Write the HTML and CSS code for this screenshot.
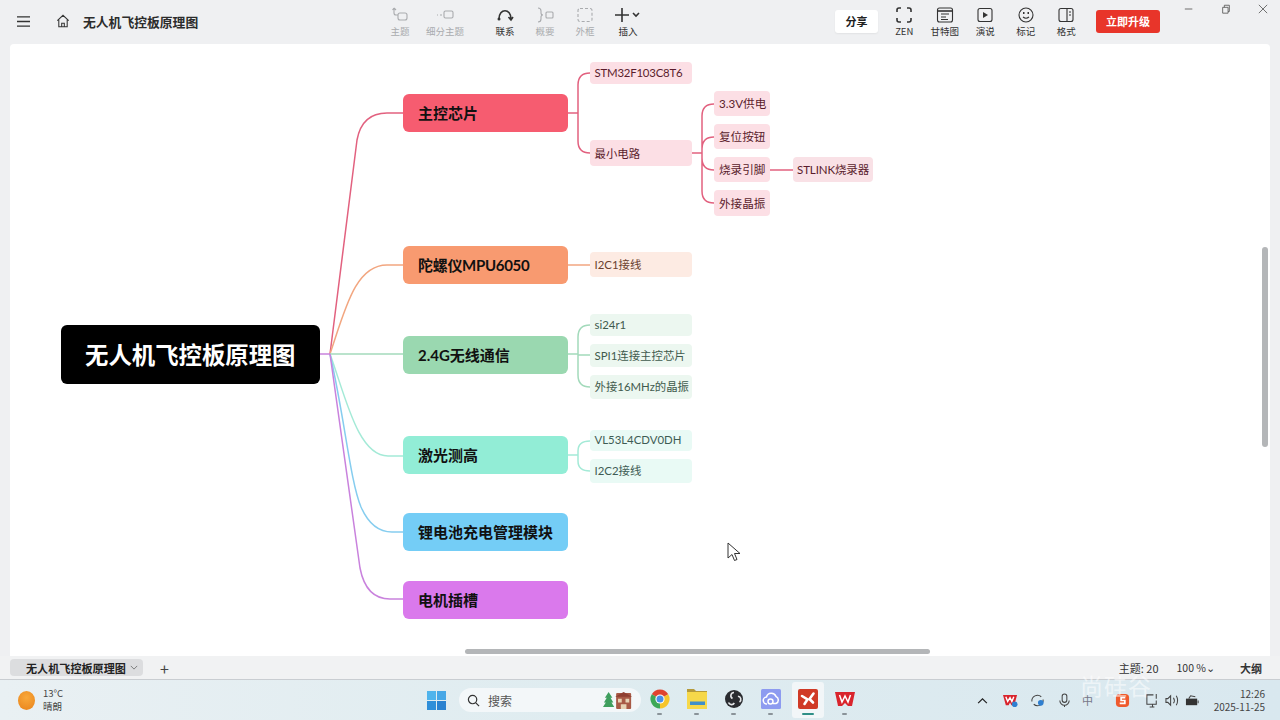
FILE: index.html
```html
<!DOCTYPE html>
<html lang="zh">
<head>
<meta charset="utf-8">
<title>无人机飞控板原理图</title>
<link rel="stylesheet" href="styles.css">
</head>
<body>
<div class="app">
  <header class="topbar">
    <div class="left">
      <svg class="ic-menu" viewBox="0 0 16 14"><path d="M1 2h14M1 7h14M1 12h14"/></svg>
      <svg class="ic-home" viewBox="0 0 16 16"><path d="M1.500 7.500 8 1.500l6.500 6M3.200 6.500v8h9.600v-8M6.500 14.500v-4h3v4"/></svg>
      <span class="doc-title">无人机飞控板原理图</span>
    </div>
    <div class="tools">
      <div class="tool off w40"><svg viewBox="0 0 18 16"><path d="M3 1v5q0 2 2 2h2M3 1 1.500 3M3 1l2 2"/><rect x="7" y="6" width="9" height="7" rx="2"/></svg><span>主题</span></div>
      <div class="tool off w50 gapr"><svg viewBox="0 0 18 16"><path d="M1 8h1M4 8h2"/><rect x="8" y="4" width="9" height="7" rx="1.500"/></svg><span>细分主题</span></div>
      <div class="tool w40"><svg viewBox="0 0 18 16"><path class="thick" d="M3 12C3 1 15 1 15 12M12.500 10l2.500 3 2-3"/><circle class="solid" cx="3" cy="12" r="1.500"/></svg><span>联系</span></div>
      <div class="tool off w40"><svg viewBox="0 0 18 16"><path d="M2 1q3 0 3 3v2q0 2 2 2-2 0-2 2v2q0 3-3 3"/><rect x="10" y="5" width="7" height="6" rx="1"/></svg><span>概要</span></div>
      <div class="tool off w40"><svg viewBox="0 0 18 16"><rect class="dash" x="2" y="1.500" width="14" height="13" rx="2"/></svg><span>外框</span></div>
      <div class="tool w46"><svg class="wide" viewBox="0 0 26 16"><path class="thick" d="M8 1v14M1 8h14M19 6l3 3 3-3"/></svg><span>插入</span></div>
    </div>
    <div class="right">
      <button class="share">分享</button>
      <div class="tool w405 first"><svg viewBox="0 0 18 16"><path class="thick" d="M2 5V3q0-2 2-2h2M12 1h2q2 0 2 2v2M16 11v2q0 2-2 2h-2M6 15H4q-2 0-2-2v-2"/></svg><span>ZEN</span></div>
      <div class="tool w405"><svg viewBox="0 0 18 16"><rect x="1.500" y="1" width="15" height="14" rx="2"/><path class="thick" d="M1.500 4h15"/><path d="M5 7h8M5 10h5M5 12.500h7"/></svg><span>甘特图</span></div>
      <div class="tool w405"><svg viewBox="0 0 18 16"><rect x="2" y="1.500" width="14" height="13" rx="2"/><path class="solid" d="M7 5l5 3-5 3z"/></svg><span>演说</span></div>
      <div class="tool w405"><svg viewBox="0 0 18 16"><circle cx="9" cy="8" r="7"/><path d="M6 10q3 2.500 6 0"/><path class="solid" d="M6 5h1.500v2H6zM10.500 5H12v2h-1.500z"/></svg><span>标记</span></div>
      <div class="tool w405"><svg viewBox="0 0 18 16"><rect x="2" y="1.500" width="14" height="13" rx="2"/><path d="M10 1.500v13M12 5h2M12 8h2"/></svg><span>格式</span></div>
      <button class="upgrade">立即升级</button>
      <div class="winctl">
        <svg viewBox="0 0 12 12"><path d="M1 6h9"/></svg>
        <svg viewBox="0 0 12 12"><path d="M2 4h6.500v7H2zM4 4V1.500h6V9H8.500"/></svg>
        <svg viewBox="0 0 12 12"><path d="M1 1l10 10M11 1 1 11"/></svg>
      </div>
    </div>
  </header>

  <main class="canvas">
    <svg class="links" viewBox="10 44 1260 612">
      <path class="pink" d="M330 354 L357 140 Q362 113 387 113 H403"/>
      <path class="orange" d="M330 354 C345 310 355 265 387 265 H403"/>
      <path class="green" d="M330 354 H403"/>
      <path class="teal" d="M330 354 C346 398 358 456 388 456 H403"/>
      <path class="blue" d="M330 354 C345 420 350 480 361 507 Q372 532 392 532 H403"/>
      <path class="purple" d="M330 354 L360 568 Q366 599 390 599 H403"/>
      <path class="root" d="M320 354 H330"/>
      <path class="pink" d="M568 113 H578 M590 73 Q578 73 578 85 V141 Q578 153 590 153"/>
      <path class="pink" d="M692 153 H702 M714 104 Q702 104 702 116 V191 Q702 203 714 203 M714 137 Q702 137 702 149 M702 158 Q702 170 714 170 M770 170 H793"/>
      <path class="orange" d="M568 265 H590"/>
      <path class="green" d="M568 354 H578 M590 325 Q578 325 578 337 V375 Q578 387 590 387 M578 355 H590"/>
      <path class="teal" d="M568 455 H578 M590 441 Q578 441 578 451 V461 Q578 471 590 471"/>
    </svg>

    <div class="node root-node">无人机飞控板原理图</div>

    <div class="node main c-red y1">主控芯片</div>
    <div class="node main c-orange y2">陀螺仪MPU6050</div>
    <div class="node main c-green y3">2.4G无线通信</div>
    <div class="node main c-teal y4">激光测高</div>
    <div class="node main c-blue y5">锂电池充电管理模块</div>
    <div class="node main c-purple y6">电机插槽</div>

    <div class="node sub s-red a1">STM32F103C8T6</div>
    <div class="node sub s-red a2">最小电路</div>
    <div class="node leaf b1">3.3V供电</div>
    <div class="node leaf b2">复位按钮</div>
    <div class="node leaf b3">烧录引脚</div>
    <div class="node leaf b4">外接晶振</div>
    <div class="node leaf stlink">STLINK烧录器</div>
    <div class="node sub s-orange a3">I2C1接线</div>
    <div class="node sub s-green a4">si24r1</div>
    <div class="node sub s-green a5">SPI1连接主控芯片</div>
    <div class="node sub s-green a6">外接16MHz的晶振</div>
    <div class="node sub s-teal a7">VL53L4CDV0DH</div>
    <div class="node sub s-teal a8">I2C2接线</div>

    <div class="scroll-v"></div>
    <div class="scroll-h"></div>
    <svg class="cursor" viewBox="0 0 14 20"><path d="M1 1v15l4-3.500 2.500 6 2.500-1-2.500-6H13z"/></svg>
  </main>

  <footer class="statusbar">
    <div class="tab"><span>无人机飞控板原理图</span><svg viewBox="0 0 10 6"><path d="M1 1l4 4 4-4"/></svg></div>
    <span class="plus">+</span>
    <div class="stat">
      <span class="s-topic">主题: 20</span>
      <span class="s-zoom">100 %⌄</span>
      <span class="s-outline">大纲</span>
    </div>
  </footer>

  <nav class="taskbar">
    <div class="weather">
      <span class="sun"></span>
      <div class="wtext"><span>13°C</span><span>晴朗</span></div>
    </div>
    <div class="center">
      <svg class="winlogo" viewBox="0 0 20 20"><path class="w1" d="M0 0h9.500v9.500H0z"/><path class="w2" d="M10.500 0H20v9.500h-9.500z"/><path class="w3" d="M0 10.500h9.500V20H0z"/><path class="w4" d="M10.500 10.500H20V20h-9.500z"/></svg>
      <div class="search">
        <svg class="q" viewBox="0 0 14 14"><circle cx="6" cy="6" r="4.500"/><path d="M9.500 9.500 13 13"/></svg>
        <span>搜索</span>
        <svg class="scene" viewBox="0 0 32 20"><path class="tree" d="M6 1l4 6H8l3 5H9l3 5H0l3-5H1l3-5H2z"/><rect class="house" x="14" y="2" width="16" height="17" rx="1"/><path class="win" d="M16 8h4v4h-4zM24 8h4v4h-4zM19 14h6v5h-6z"/><path class="roof" d="M13 6l9-5 9 5z"/></svg>
      </div>
      <div class="app-ic">
        <svg viewBox="0 0 20 20"><path class="ch-r" d="M10 10 1.770 5.250A9.500 9.500 0 0 1 18.230 5.250Z"/><path class="ch-y" d="M10 10 18.230 5.250A9.500 9.500 0 0 1 10 19.500Z"/><path class="ch-g" d="M10 10V19.500A9.500 9.500 0 0 1 1.770 5.250Z"/><circle class="ch-w" cx="10" cy="10" r="4.600"/><circle class="ch-b" cx="10" cy="10" r="3.500"/></svg>
        <i></i>
      </div>
      <div class="app-ic">
        <svg viewBox="0 0 20 20"><path class="f-back" d="M0 0h7l2 2h11v4H0z"/><path class="f-front" d="M0 3h20v17H0z"/><path class="f-blue" d="M3 12.500h15V16H3z"/></svg>
        <i></i>
      </div>
      <div class="app-ic">
        <svg viewBox="0 0 20 20"><circle class="obs" cx="10" cy="10" r="9"/><path class="obs-s" d="M10 3.500a3.200 3.200 0 0 0-1.500 6M15.500 13a3.200 3.200 0 0 0-1.600-5.800M4.500 13.500a3.200 3.200 0 0 0 5.800.5"/></svg>
        <i></i>
      </div>
      <div class="app-ic">
        <svg viewBox="0 0 20 20"><rect class="cl-bg" width="20" height="20" rx="1.500"/><path class="cl" d="M6 15a3.500 3.500 0 0 1-.5-7 5 5 0 0 1 9.500-.5A3.800 3.800 0 0 1 15 14.500h-3"/><circle class="cl" cx="9.500" cy="12.500" r="2.500"/></svg>
        <i></i>
      </div>
      <div class="app-ic active">
        <svg viewBox="0 0 20 20"><rect class="xm" width="20" height="20" rx="2"/><path class="xm-w" d="M4 7l5.500 3.500L6.500 15M15.500 4.500l-4 5.500 3.500 3.500"/></svg>
        <i></i>
      </div>
      <div class="app-ic">
        <svg viewBox="0 0 20 20"><path class="wps" d="M0 3h20l-3 14h-4l-3-3-3 3H3z"/><path class="wps-w" d="M4.500 6l2.500 7 3-6 3 6 2.500-7"/></svg>
        <i></i>
      </div>
    </div>
    <div class="tray">
      <svg class="t-up" viewBox="0 0 12 8"><path d="M1 7l5-5 5 5"/></svg>
      <svg class="t-ic" viewBox="0 0 16 16"><path class="wps" d="M0 2h15l-3 11H9L7.500 10 6 13H3z"/><path class="wps-w" d="M3 4l2 5 2.500-4 2 4 2-5"/><circle class="t-blue" cx="12.500" cy="12" r="3"/></svg>
      <svg class="t-ic" viewBox="0 0 16 16"><path class="t-line" d="M2 9a6 6 0 0 1 10-5M14 7a6 6 0 0 1-10 5"/><circle class="t-blue" cx="11.500" cy="10.500" r="3"/></svg>
      <svg class="t-ic" viewBox="0 0 16 16"><rect class="t-line" x="5.500" y="1" width="5" height="9" rx="2.500"/><path class="t-line" d="M3 8a5 5 0 0 0 10 0M8 13v2"/></svg>
      <span class="t-cn">中</span>
      <svg class="t-ic" viewBox="0 0 16 16"><rect class="sogou" x="1" y="1" width="14" height="14" rx="4"/><path class="sogou-w" d="M11 5H6.500v3H10.500v3H5"/></svg>
      <svg class="t-ic t-mon" viewBox="0 0 16 16"><path class="t-line" d="M9 2H2v10h10V8M5 15h5M8 12v3"/><path class="t-line" d="M12 1v5"/></svg>
      <svg class="t-ic t-tight" viewBox="0 0 16 16"><path class="t-line" d="M1 6v4h2l3 3V3L3 6zM9 5q2 3 0 6M12 3q3 5 0 10"/></svg>
      <svg class="t-ic" viewBox="0 0 16 16"><path class="t-solid" d="M1 6h12v7H1z"/><path class="t-line" d="M4 6l2-3 5 1M14 8v3"/></svg>
      <div class="clock"><span>12:26</span><span>2025-11-25</span></div>
    </div>
  </nav>
  <div class="watermark">尚硅谷</div>
</div>
</body>
</html>
```

FILE: styles.css
```css
* { box-sizing: border-box; }
html, body { margin: 0; padding: 0; }
body { width: 1280px; height: 720px; overflow: hidden; background: #eff0f2; font-family: "Noto Sans CJK SC", "Noto Sans", sans-serif; color: #222; }
.app { width: 1280px; height: 720px; display: flex; flex-direction: column; position: relative; overflow: hidden; }

/* top bar */
.topbar { height: 44px; display: flex; align-items: stretch; flex: none; }
.left { width: 380px; display: flex; align-items: center; padding: 0 0 2px 16px; }
.left svg { fill: none; stroke: #333; }
.ic-menu { width: 15px; height: 13px; stroke-width: 1.500; }
.ic-home { width: 14px; height: 14px; margin-left: 25px; stroke-width: 1.200; }
.doc-title { margin-left: 13px; font-size: 12.800px; font-weight: 700; color: #2c2c2c; }
.tools { width: 455px; display: flex; }
.tool { display: flex; flex-direction: column; align-items: center; padding-top: 7px; font-size: 9.500px; line-height: 12px; color: #333; flex: none; white-space: nowrap; }
.tool svg { width: 18px; height: 16px; margin-bottom: 2px; fill: none; stroke: #333; stroke-width: 1.100; }
.tool svg.wide { width: 26px; margin-left: -2px; }
.tool .thick { stroke-width: 1.600; }
.tool .solid { fill: #333; stroke: none; }
.tool .dash { stroke-dasharray: 3 2; }
.tool.off { color: #a9abae; }
.tool.off svg { stroke: #a9abae; }
.w40 { width: 40px; }
.w405 { width: 40.500px; }
.w46 { width: 46px; }
.w50 { width: 50px; }
.gapr { margin-right: 15px; }
.right { flex: 1; display: flex; align-items: flex-start; }
.share { width: 43px; height: 23px; margin-top: 10px; border: 0; border-radius: 3px; background: #fff; font: 700 11px "Noto Sans CJK SC", sans-serif; color: #222; box-shadow: 0 1px 2px rgba(0,0,0,.06); padding: 0 0 1px; }
.tool.first { margin-left: 6px; }
.upgrade { width: 64px; height: 23px; margin: 10px 0 0 9.500px; border: 0; border-radius: 3px; background: #e8352a; color: #fff; font: 700 11px "Noto Sans CJK SC", sans-serif; padding: 0 0 1px; }
.winctl { margin-left: 24px; display: flex; padding-top: 4px; gap: 27px; }
.winctl svg { width: 10px; height: 10px; flex: none; fill: none; stroke: #555; stroke-width: 1; }

/* canvas */
.canvas { position: relative; flex: none; width: 1260px; height: 612px; margin-left: 10px; background: #fff; border-radius: 4px 4px 0 0; }
.links { position: absolute; left: 0; top: 0; width: 1260px; height: 612px; fill: none; stroke-width: 1.500; }
.links .pink { stroke: #e2617f; }
.links .orange { stroke: #f2a680; }
.links .green { stroke: #a3dabb; }
.links .teal { stroke: #a4ead7; }
.links .blue { stroke: #86cdef; }
.links .purple { stroke: #c982dd; }
.links .root { stroke: #c982dd; }
.node { position: absolute; display: flex; align-items: center; white-space: nowrap; font-family: Lato, "Noto Sans CJK SC", sans-serif; padding-bottom: 2px; }
.root-node { left: 51px; top: 281px; width: 259px; height: 59px; background: #000; color: #fff; border-radius: 6px; font-size: 23.400px; font-weight: 700; padding-left: 24px; }
.main { left: 393px; width: 165px; height: 38px; border-radius: 6px; font-size: 15px; font-weight: 700; color: #111; padding-left: 15px; }
.y1 { top: 50px; }
.y2 { top: 202px; letter-spacing: -.3px; }
.y3 { top: 292px; }
.y4 { top: 392px; height: 38px; }
.y5 { top: 469px; }
.y6 { top: 537px; }
.c-red { background: #f65c70; }
.c-orange { background: #f89a70; }
.c-green { background: #9ad8b0; }
.c-teal { background: #92edd6; }
.c-blue { background: #74cdf6; }
.c-purple { background: #da79ec; }
.sub { left: 580px; width: 102px; height: 24px; border-radius: 4px; font-size: 11.400px; padding-left: 4.500px; }
.leaf { width: 56px; height: 25px; border-radius: 4px; background: #fcdfe5; color: #5a1c2c; font-size: 11.600px; padding-left: 5px; padding-bottom: 1px; }
.s-red { background: #fcdfe5; color: #5a1c2c; }
.s-orange { background: #fdebe3; color: #6a3f2e; }
.s-green { background: #ecf7f0; color: #3f5a4d; }
.s-teal { background: #e9faf5; color: #3e5c54; }
.a1 { top: 18px; height: 22px; letter-spacing: -.2px; }
.a2 { top: 96px; height: 26px; padding-bottom: 1px; }
.a3 { top: 208px; height: 25px; }
.a4 { top: 270px; height: 22px; }
.a5 { top: 300px; height: 23px; }
.a6 { top: 331px; }
.a7 { top: 386px; height: 21px; }
.a8 { top: 415px; }
.b1, .b2, .b3, .b4 { left: 704px; }
.b1 { top: 47px; }
.b2 { top: 80px; }
.b3 { top: 113px; }
.b4 { top: 146px; height: 26px; }
.stlink { left: 783px; top: 113px; width: 80px; background: #f9e1e6; padding-left: 4px; font-size: 11.500px; letter-spacing: -.1px; }
.scroll-v { position: absolute; left: 1252px; top: 203px; width: 6px; height: 200px; border-radius: 3px; background: #b4b6b8; }
.scroll-h { position: absolute; left: 455px; top: 605px; width: 465px; height: 5px; border-radius: 3px; background: #b4b6b8; }
.cursor { position: absolute; left: 717px; top: 498px; width: 14px; height: 20px; fill: #fff; stroke: #333; stroke-width: 1; }

/* status bar */
.statusbar { height: 24px; flex: none; display: flex; align-items: center; padding: 0 0 0 10px; position: relative; border-bottom: 1px solid #c9cdd1; background: #f1f2f3; }
.tab { width: 133px; height: 17px; background: #dcdddf; border-radius: 4px; display: flex; align-items: center; padding-left: 16px; font-size: 11.100px; font-weight: 700; color: #222; }
.tab svg { width: 8px; height: 5px; margin-left: 4px; fill: none; stroke: #666; }
.plus { margin-left: 17px; font-size: 16px; line-height: 1; color: #444; }
.stat { margin-left: auto; display: flex; font-size: 11px; line-height: 12px; color: #333; }
.s-topic { margin-right: 18px; }
.s-zoom { margin-right: 25px; font-size: 10.500px; }
.s-outline { margin-right: 18px; font-weight: 700; }

/* taskbar */
.taskbar { flex: 1; position: relative; display: flex; align-items: center; background: linear-gradient(90deg, #e9f0f3 0%, #dfecf0 45%, #d9e8ef 100%); }
.weather { display: flex; align-items: center; padding-left: 18px; width: 427px; }
.sun { width: 17px; height: 19px; border-radius: 50%; background: radial-gradient(circle at 50% 35%, #f9a83a, #e8821a); }
.wtext { margin-left: 8px; display: flex; flex-direction: column; font-size: 9.500px; line-height: 13px; color: #444; }
.center { display: flex; align-items: center; }
.winlogo { width: 19px; height: 19px; }
.w1 { fill: #4fb4ec; }
.w2 { fill: #46a7e6; }
.w3 { fill: #2f8fd9; }
.w4 { fill: #2a82d0; }
.search { width: 182px; height: 24px; margin-left: 13px; background: #f3f7f9; border-radius: 12px; display: flex; align-items: center; padding-left: 8px; font-size: 12px; color: #555; }
.q { width: 13px; height: 13px; margin-right: 8px; fill: none; stroke: #333; stroke-width: 1.300; }
.scene { width: 30px; height: 19px; margin-left: auto; margin-right: 8px; }
.tree { fill: #3f9f5e; }
.house { fill: #a85a46; }
.win { fill: #e7d3b5; }
.roof { fill: #8f3f32; }
.app-ic { width: 37px; height: 36px; display: flex; align-items: center; justify-content: center; position: relative; flex: none; }
.app-ic svg { width: 20px; height: 20px; margin-bottom: 2px; }
.app-ic i { position: absolute; bottom: 3px; width: 5px; height: 2px; border-radius: 1px; background: #8a9399; }
.app-ic.active { width: 32px; margin: 0 2.500px; background: #f2f6f8; border-radius: 3px; }
.app-ic.active i { width: 12px; background: #2f8f87; }
.ch-r { fill: #e0432f; }
.ch-y { fill: #f6c52b; }
.ch-g { fill: #3da856; }
.ch-w { fill: #fff; }
.ch-b { fill: #4a8fe8; }
.f-back { fill: #b59a3a; }
.f-front { fill: #f6d84a; }
.f-blue { fill: #3f8fc9; }
.obs { fill: #2a2c30; }
.obs-s { fill: none; stroke: #e4e6e8; stroke-width: 1.600; }
.cl-bg { fill: #8d9bf0; }
.cl { fill: none; stroke: #fff; stroke-width: 1.500; }
.xm { fill: #d03a26; }
.xm-w { fill: none; stroke: #fff; stroke-width: 2.600; stroke-linecap: round; }
.wps { fill: #d9242c; }
.wps-w { fill: none; stroke: #fff; stroke-width: 1.500; }
.tray { position: absolute; left: 977px; right: 0; top: 0; bottom: 0; display: flex; align-items: center; }
.t-up { width: 11px; height: 7px; fill: none; stroke: #222; stroke-width: 1.400; margin-right: 15px; flex: none; }
.t-ic { width: 15px; height: 15px; margin-right: 12px; flex: none; }
.t-mon { margin-left: 3px; margin-right: 5px; }
.t-tight { margin-right: 5px; }
.t-line { fill: none; stroke: #444; stroke-width: 1.100; }
.t-solid { fill: #333; }
.t-blue { fill: #2f7fd0; }
.t-cn { width: 15px; margin-left: -2px; margin-right: 18px; font-size: 11px; color: #778; }
.sogou { fill: #ef5a2d; }
.sogou-w { fill: none; stroke: #fff; stroke-width: 1.800; }
.clock { margin-left: auto; padding-right: 15px; display: flex; flex-direction: column; align-items: flex-end; font-size: 10px; line-height: 13px; color: #444; white-space: nowrap; }

.watermark { position: absolute; left: 1080px; top: 674px; font-size: 23px; line-height: 23px; color: rgba(255,255,255,.55); letter-spacing: 1px; }
```
